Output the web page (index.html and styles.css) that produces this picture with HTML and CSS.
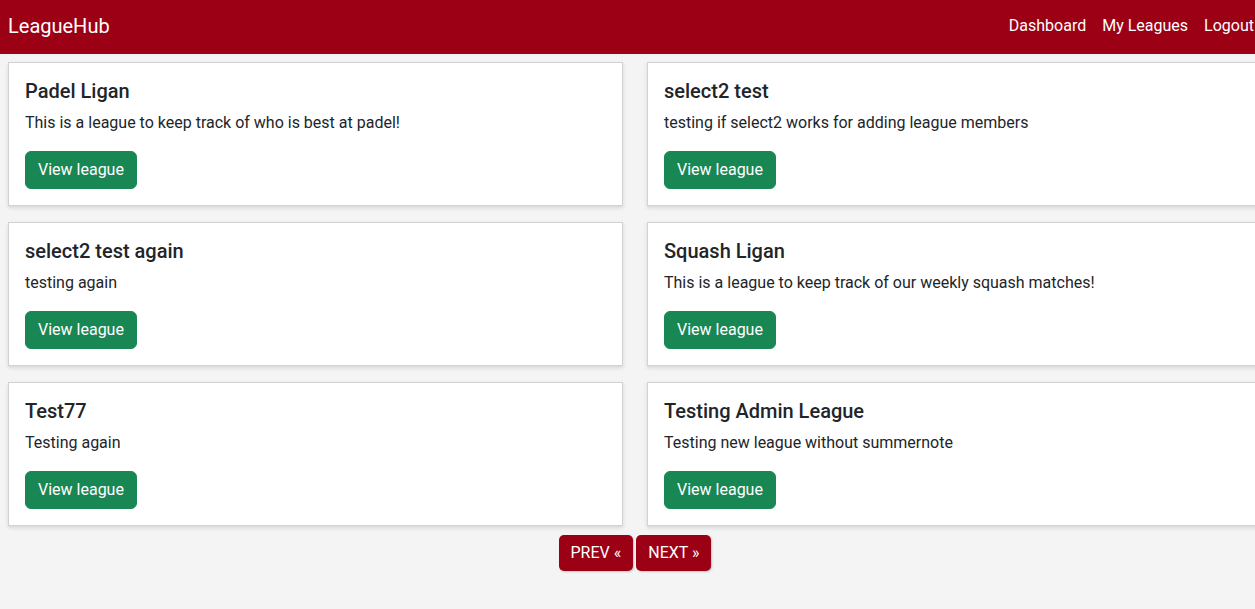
FILE: index.html
```html
<!DOCTYPE html>
<html lang="en">
<head>
<meta charset="utf-8">
<title>LeagueHub</title>
<link rel="stylesheet" href="styles.css">
</head>
<body>
<nav class="navbar">
  <a class="brand" href="#">LeagueHub</a>
  <div class="nav-links">
    <a href="#">Dashboard</a>
    <a href="#">My Leagues</a>
    <a href="#">Logout</a>
  </div>
</nav>
<main class="content">
  <div class="grid">
    <div class="card">
      <h5 class="card-title">Padel Ligan</h5>
      <p class="card-text">This is a league to keep track of who is best at padel!</p>
      <a class="btn" href="#">View league</a>
    </div>
    <div class="card">
      <h5 class="card-title">select2 test</h5>
      <p class="card-text">testing if select2 works for adding league members</p>
      <a class="btn" href="#">View league</a>
    </div>
    <div class="card">
      <h5 class="card-title">select2 test again</h5>
      <p class="card-text">testing again</p>
      <a class="btn" href="#">View league</a>
    </div>
    <div class="card">
      <h5 class="card-title">Squash Ligan</h5>
      <p class="card-text">This is a league to keep track of our weekly squash matches!</p>
      <a class="btn" href="#">View league</a>
    </div>
    <div class="card">
      <h5 class="card-title">Test77</h5>
      <p class="card-text">Testing again</p>
      <a class="btn" href="#">View league</a>
    </div>
    <div class="card">
      <h5 class="card-title">Testing Admin League</h5>
      <p class="card-text">Testing new league without summernote</p>
      <a class="btn" href="#">View league</a>
    </div>
  </div>
  <div class="pagination">
    <a class="page-btn" href="#">PREV &laquo;</a>
    <a class="page-btn" href="#">NEXT &raquo;</a>
  </div>
</main>
</body>
</html>
```
FILE: styles.css
```css
html, body {
  margin: 0;
  padding: 0;
  overflow: hidden;
}
body {
  background: #f4f4f4;
  font-family: Roboto, "Liberation Sans", sans-serif;
  font-size: 16px;
  line-height: 1.5;
  color: #212529;
  width: 1255px;
  height: 609px;
}
a { text-decoration: none; }
.navbar {
  background: #9b0014;
  height: 54px;
  display: flex;
  align-items: center;
  justify-content: space-between;
  padding: 0 1px 2px 8px;
  box-sizing: border-box;
}
.brand {
  color: #fff;
  font-size: 20px;
  line-height: 30px;
}
.nav-links {
  display: flex;
  gap: 16px;
}
.nav-links a {
  color: #fff;
  font-size: 16px;
}
.content {
  padding: 8px;
  width: 1254px;
}
.grid {
  display: grid;
  grid-template-columns: 615px 615px;
  column-gap: 24px;
  row-gap: 16px;
}
.card {
  background: #fff;
  border: 1px solid #d2d2d2;
  box-shadow: 0 2px 4px rgba(0,0,0,0.12);
  padding: 16px;
  height: 144px;
  box-sizing: border-box;
}
.card-title {
  margin: 0 0 8px;
  font-size: 20px;
  font-weight: 500;
  line-height: 1.2;
}
.card-text {
  margin: 0 0 16px;
}
.btn {
  display: inline-block;
  background: #198754;
  border: 1px solid #198754;
  color: #fff;
  padding: 6px 12px;
  border-radius: 6px;
  line-height: 24px;
}
.pagination {
  display: flex;
  justify-content: center;
  gap: 3px;
  margin-top: 9px;
}
.page-btn {
  background: #9b0014;
  color: #fff;
  padding: 6px 12px;
  line-height: 24px;
  border-radius: 5px;
  box-shadow: 1px 1px 2px rgba(0,0,0,0.2);
}
```
